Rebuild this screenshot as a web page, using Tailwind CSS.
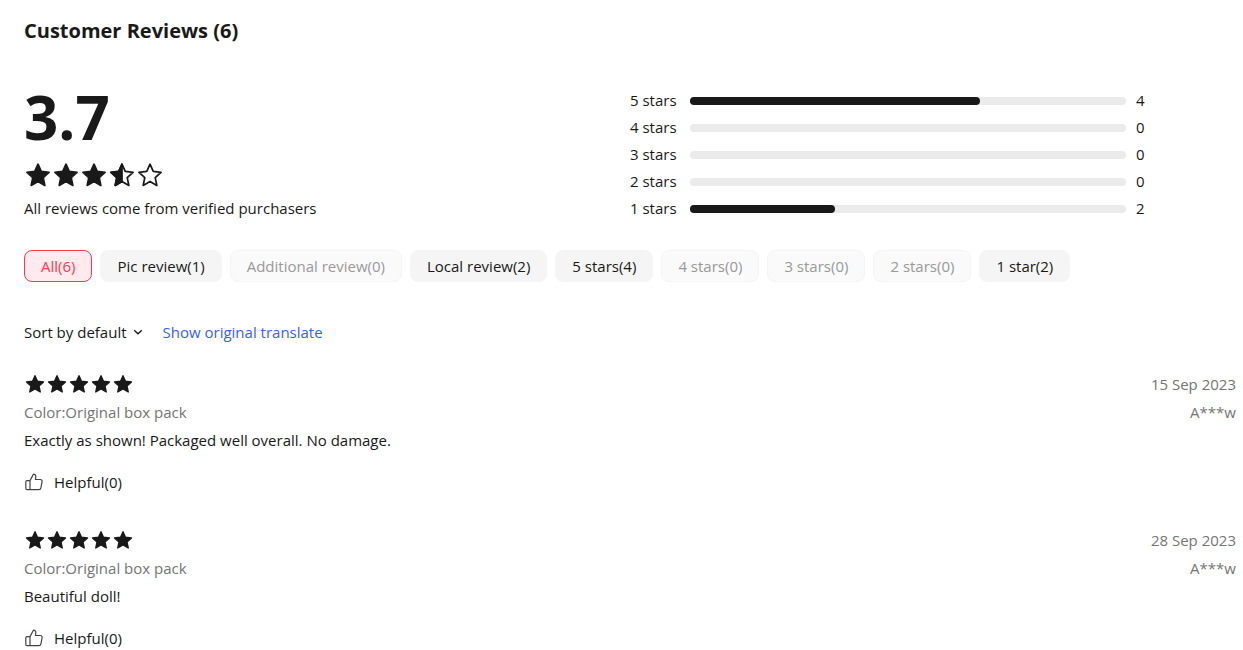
<!DOCTYPE html>
<html lang="en">
<head>
<meta charset="utf-8">
<title>Customer Reviews</title>
<script src="https://cdn.jsdelivr.net/npm/@tailwindcss/browser@4"></script>
</head>
<body class="bg-white font-['Open_Sans',sans-serif] text-[#191919] overflow-hidden">
<svg class="hidden">
  <symbol id="star" viewBox="0 0 24 24"><path d="M12 2l3 6.7 7.2.8-5.4 4.9 1.5 7.2-6.3-3.6-6.3 3.6 1.5-7.2-5.4-4.9 7.2-.8z" stroke-width="1.6" stroke-linejoin="round"/></symbol>
  <symbol id="thumb" viewBox="0 0 20 20"><path d="M6 8.6v9H3a1.2 1.2 0 0 1-1.2-1.2V9.8A1.2 1.2 0 0 1 3 8.6h3l3.4-6.4c1.6 0 2.6 1.1 2.4 2.7l-.4 2.6h4.9c1.2 0 2 1.1 1.8 2.2l-1.2 6.2c-.2 1-1 1.7-2 1.7H6" fill="none" stroke="currentColor" stroke-width="1.2" stroke-linejoin="round"/></symbol>
</svg>
<div class="w-[1243px] h-[650px] pl-6 pr-[7px] overflow-hidden">
  <h2 class="pt-[17px] text-[20px] leading-7 font-bold">Customer Reviews (6)</h2>

  <div class="flex mt-[24px] h-[161px]">
    <div class="w-[606px] pt-[16px]">
      <div class="text-[60px] leading-[64px] font-bold">3.7</div>
      <div class="flex gap-0.5 mt-[13px] ml-px h-[26px] items-center">
        <svg class="w-[26px] h-[26px] fill-[#191919] stroke-[#191919]"><use href="#star"/></svg>
        <svg class="w-[26px] h-[26px] fill-[#191919] stroke-[#191919]"><use href="#star"/></svg>
        <svg class="w-[26px] h-[26px] fill-[#191919] stroke-[#191919]"><use href="#star"/></svg>
        <svg class="w-[26px] h-[26px]" viewBox="0 0 24 24">
          <path d="M12 2l3 6.7 7.2.8-5.4 4.9 1.5 7.2-6.3-3.6-6.3 3.6 1.5-7.2-5.4-4.9 7.2-.8z" fill="none" stroke="#191919" stroke-width="1.6" stroke-linejoin="round"/>
          <path d="M12 2v16l-6.3 3.6 1.5-7.2-5.4-4.9 7.2-.8z" fill="#191919" stroke="#191919" stroke-width="1.6" stroke-linejoin="round"/>
        </svg>
        <svg class="w-[26px] h-[26px]" viewBox="0 0 24 24"><path d="M12 2l3 6.7 7.2.8-5.4 4.9 1.5 7.2-6.3-3.6-6.3 3.6 1.5-7.2-5.4-4.9 7.2-.8z" fill="none" stroke="#191919" stroke-width="1.6" stroke-linejoin="round"/></svg>
      </div>
      <p class="text-[15px] leading-5 mt-[10px]">All reviews come from verified purchasers</p>
    </div>
    <div class="pt-[21px] flex flex-col gap-[5px] text-[15px] leading-5">
      <div class="flex items-center"><span class="w-[46px] mb-0.5 text-right whitespace-nowrap">5 stars</span><div class="w-[436px] h-2 ml-[14px] rounded bg-[#ebebeb]"><div class="w-[290px] h-2 rounded bg-[#191919]"></div></div><span class="ml-[10px] mb-0.5">4</span></div>
      <div class="flex items-center"><span class="w-[46px] mb-0.5 text-right whitespace-nowrap">4 stars</span><div class="w-[436px] h-2 ml-[14px] rounded bg-[#ebebeb]"></div><span class="ml-[10px] mb-0.5">0</span></div>
      <div class="flex items-center"><span class="w-[46px] mb-0.5 text-right whitespace-nowrap">3 stars</span><div class="w-[436px] h-2 ml-[14px] rounded bg-[#ebebeb]"></div><span class="ml-[10px] mb-0.5">0</span></div>
      <div class="flex items-center"><span class="w-[46px] mb-0.5 text-right whitespace-nowrap">2 stars</span><div class="w-[436px] h-2 ml-[14px] rounded bg-[#ebebeb]"></div><span class="ml-[10px] mb-0.5">0</span></div>
      <div class="flex items-center"><span class="w-[46px] mb-0.5 text-right whitespace-nowrap">1 stars</span><div class="w-[436px] h-2 ml-[14px] rounded bg-[#ebebeb]"><div class="w-[145px] h-2 rounded bg-[#191919]"></div></div><span class="ml-[10px] mb-0.5">2</span></div>
    </div>
  </div>

  <div class="flex gap-2 mt-[20px] text-[15px]">
    <button class="h-8 px-4 rounded-lg border border-[#fd384f] bg-[#ffebed] text-[#fd384f]">All(6)</button>
    <button class="h-8 px-4 rounded-lg border border-[#f5f5f5] bg-[#f5f5f5]">Pic review(1)</button>
    <button class="h-8 px-4 rounded-lg border border-[#f5f5f5] bg-[#fafafa] text-[#999]">Additional review(0)</button>
    <button class="h-8 px-4 rounded-lg border border-[#f5f5f5] bg-[#f5f5f5]">Local review(2)</button>
    <button class="h-8 px-4 rounded-lg border border-[#f5f5f5] bg-[#f5f5f5]">5 stars(4)</button>
    <button class="h-8 px-4 rounded-lg border border-[#f5f5f5] bg-[#fafafa] text-[#999]">4 stars(0)</button>
    <button class="h-8 px-4 rounded-lg border border-[#f5f5f5] bg-[#fafafa] text-[#999]">3 stars(0)</button>
    <button class="h-8 px-4 rounded-lg border border-[#f5f5f5] bg-[#fafafa] text-[#999]">2 stars(0)</button>
    <button class="h-8 px-4 rounded-lg border border-[#f5f5f5] bg-[#f5f5f5]">1 star(2)</button>
  </div>

  <div class="flex items-center mt-[40px] h-5 text-[15px]">
    <span>Sort by default</span>
    <svg class="w-2.5 h-2.5 ml-[6px]" viewBox="0 0 10 10"><path d="M1.2 3.2L5 6.8l3.8-3.6" fill="none" stroke="#191919" stroke-width="1.3"/></svg>
    <span class="ml-[20px] text-[#3860f4]">Show original translate</span>
  </div>

  <div class="flex flex-col gap-[36px] mt-[32px] text-[15px] leading-5">
    <div class="flex justify-between h-[120px]">
      <div>
        <div class="flex h-5 gap-0.5 ml-px items-center">
          <svg class="w-5 h-5 fill-[#191919] stroke-[#191919]"><use href="#star"/></svg>
          <svg class="w-5 h-5 fill-[#191919] stroke-[#191919]"><use href="#star"/></svg>
          <svg class="w-5 h-5 fill-[#191919] stroke-[#191919]"><use href="#star"/></svg>
          <svg class="w-5 h-5 fill-[#191919] stroke-[#191919]"><use href="#star"/></svg>
          <svg class="w-5 h-5 fill-[#191919] stroke-[#191919]"><use href="#star"/></svg>
        </div>
        <p class="mt-2 text-[#757575]">Color:Original box pack</p>
        <p class="mt-2">Exactly as shown! Packaged well overall. No damage.</p>
        <div class="flex items-center mt-[22px]">
          <svg class="w-5 h-5 text-[#444]"><use href="#thumb"/></svg>
          <span class="ml-2.5">Helpful(0)</span>
        </div>
      </div>
      <div class="text-right text-[#757575]">
        <p>15 Sep 2023</p>
        <p class="mt-2">A***w</p>
      </div>
    </div>
    <div class="flex justify-between h-[120px]">
      <div>
        <div class="flex h-5 gap-0.5 ml-px items-center">
          <svg class="w-5 h-5 fill-[#191919] stroke-[#191919]"><use href="#star"/></svg>
          <svg class="w-5 h-5 fill-[#191919] stroke-[#191919]"><use href="#star"/></svg>
          <svg class="w-5 h-5 fill-[#191919] stroke-[#191919]"><use href="#star"/></svg>
          <svg class="w-5 h-5 fill-[#191919] stroke-[#191919]"><use href="#star"/></svg>
          <svg class="w-5 h-5 fill-[#191919] stroke-[#191919]"><use href="#star"/></svg>
        </div>
        <p class="mt-2 text-[#757575]">Color:Original box pack</p>
        <p class="mt-2">Beautiful doll!</p>
        <div class="flex items-center mt-[22px]">
          <svg class="w-5 h-5 text-[#444]"><use href="#thumb"/></svg>
          <span class="ml-2.5">Helpful(0)</span>
        </div>
      </div>
      <div class="text-right text-[#757575]">
        <p>28 Sep 2023</p>
        <p class="mt-2">A***w</p>
      </div>
    </div>
  </div>
</div>
</body>
</html>
